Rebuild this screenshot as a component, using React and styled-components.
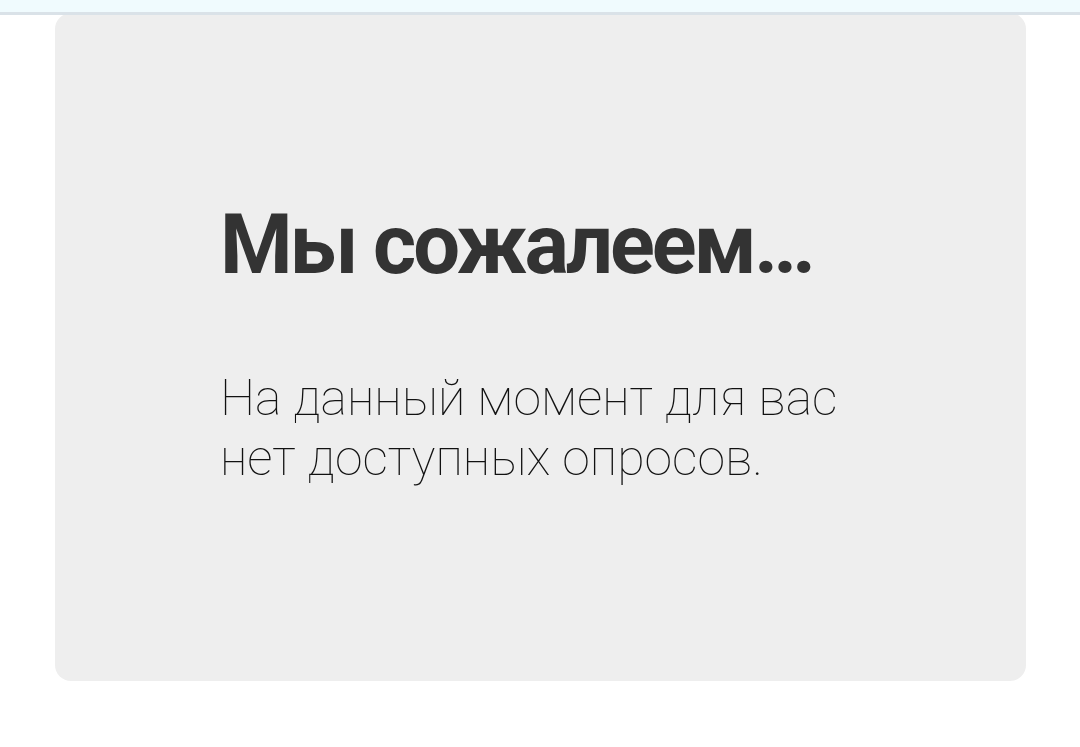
import React from 'react';
import styled, { createGlobalStyle } from 'styled-components';

const App = () => (
  <>
    <GlobalStyle />
    <TopBar />
    <Main>
      <Card>
        <Title>Мы сожалеем…</Title>
        <Message>На данный момент для вас нет доступных опросов.</Message>
      </Card>
    </Main>
  </>
);

export default App;

const GlobalStyle = createGlobalStyle`
  body {
    margin: 0;
    background: #ffffff;
    color: #333333;
    font-family: Roboto, sans-serif;
  }
`;

// stays above the card, which slides slightly under it
const TopBar = styled.header`
  position: relative;
  height: 12px;
  background: #f0fbfe;
  border-bottom: 3px solid #dae2e8;
`;

const Main = styled.main`
  padding: 0 54px 64px 55px;
`;

const Card = styled.section`
  margin-top: -2px;
  padding: 182px 165px 193px;
  border-radius: 16px;
  background: #eeeeee;
`;

const Title = styled.h1`
  margin: 0;
  font-size: 83px;
  font-weight: 700;
  line-height: 100px;
  letter-spacing: -3px;
`;

const Message = styled.p`
  margin: 73px 0 0;
  color: #111111;
  font-size: 50px;
  font-weight: 100;
  line-height: 60px;
`;
